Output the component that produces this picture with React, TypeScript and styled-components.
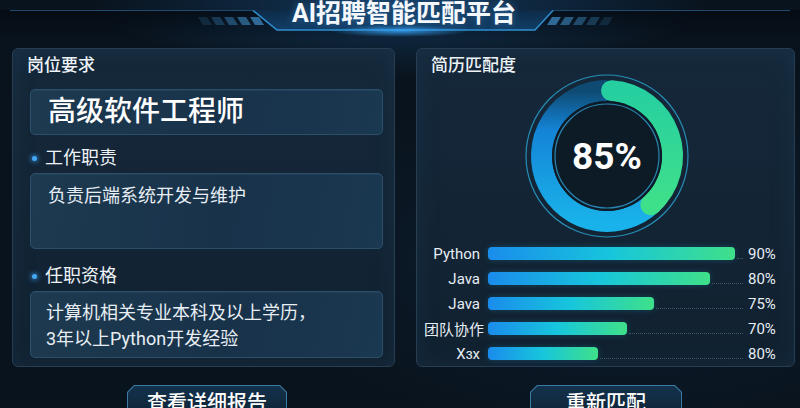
import React from "react";
import styled, { createGlobalStyle } from "styled-components";

const GlobalStyle = createGlobalStyle`
  html, body {
    margin: 0;
    padding: 0;
  }
  body {
    width: 800px;
    height: 408px;
    overflow: hidden;
    background: #09131d;
    font-family: Roboto, "Noto Sans CJK SC", sans-serif;
    color: #fff;
  }
`;

const Screen = styled.div`
  width: 800px;
  height: 408px;
  overflow: hidden;
  display: flex;
  flex-direction: column;
  background:
    radial-gradient(ellipse 440px 110px at 400px 0px, rgba(28, 90, 150, 0.5), transparent 70%),
    radial-gradient(ellipse 520px 260px at 620px 260px, rgba(20, 50, 80, 0.35), transparent 70%),
    #09131d;
`;

/* ---------- header ---------- */

const Header = styled.header`
  position: relative;
  height: 48px;
  flex-shrink: 0;
  display: flex;
  justify-content: center;
`;

const HeaderArt = styled.svg`
  position: absolute;
  inset: 0;
`;

const Title = styled.h1`
  position: relative;
  margin: 0;
  padding: 1px 0 0 8px;
  font-size: 25px;
  line-height: 26px;
  font-weight: 700;
  color: #f4f8fc;
  text-shadow: 0 0 8px rgba(80, 170, 255, 0.45);
`;

/* ---------- panels ---------- */

const Main = styled.main`
  display: grid;
  grid-template-columns: 383px 379px;
  column-gap: 21px;
  padding-left: 12px;
  height: 329px;
`;

const Panel = styled.section`
  box-sizing: border-box;
  height: 100%;
  border: 1px solid #263d52;
  border-radius: 6px;
  background: linear-gradient(180deg, #15283a 0%, #112130 100%);
  box-shadow: inset 0 0 24px rgba(40, 90, 130, 0.18);
  padding: 6px 11px 0 14px;
  display: flex;
  flex-direction: column;
`;

const PanelTitle = styled.h2`
  margin: 0;
  font-size: 17px;
  line-height: 20px;
  font-weight: 500;
  color: #eef3f8;
`;

const InfoBox = styled.div<{ $h: number; $top: number; $pad: string }>`
  box-sizing: border-box;
  height: ${(p) => p.$h}px;
  margin: ${(p) => p.$top}px 0 0 3px;
  padding: ${(p) => p.$pad};
  border: 1px solid #2c4f69;
  border-radius: 5px;
  background: linear-gradient(100deg, #1d3a50 0%, #18324a 55%, #1a3850 100%);
  box-shadow: inset 0 1px 0 rgba(120, 180, 220, 0.08);
`;

const JobName = styled.div`
  font-size: 28px;
  line-height: 44px;
  font-weight: 500;
  color: #ffffff;
`;

const BoxText = styled.p`
  margin: 0;
  font-size: 18px;
  line-height: 26px;
  color: #e8eef4;
`;

const Section = styled.div<{ $top: number }>`
  display: flex;
  align-items: center;
  gap: 8px;
  margin: ${(p) => p.$top}px 0 0 5px;
  height: 22px;
  font-size: 18px;
  line-height: 22px;
  color: #eef3f8;
`;

const Dot = styled.span`
  width: 5px;
  height: 5px;
  border-radius: 50%;
  background: #44a8f5;
  box-shadow: 0 0 5px 1px rgba(60, 160, 245, 0.7);
`;

/* ---------- ring ---------- */

const RingWrap = styled.div`
  display: grid;
  place-items: center;
  margin: -2px auto 0;
  width: 166px;
  height: 166px;
  & > * {
    grid-area: 1 / 1;
  }
`;

const RingValue = styled.span`
  font-size: 37px;
  line-height: 40px;
  font-weight: 700;
  color: #ffffff;
  padding-top: 2px;
`;

/* ---------- bars ---------- */

const Bars = styled.div`
  margin: 2px 0 0 -7px;
  display: flex;
  flex-direction: column;
`;

const BarRow = styled.div`
  display: flex;
  align-items: center;
  height: 25px;
`;

const BarLabel = styled.span`
  width: 56px;
  margin-right: 8px;
  text-align: right;
  font-size: 15px;
  color: #e6edf3;
  white-space: nowrap;
`;

const Track = styled.div`
  width: 255px;
  height: 13px;
  display: flex;
`;

const Fill = styled.div`
  height: 100%;
  border-radius: 4px;
  background: linear-gradient(90deg, #1a8cec 0%, #17c6dc 50%, #3fe089 100%);
  box-shadow: 0 0 6px rgba(30, 170, 220, 0.25);
`;

const Dots = styled.div`
  flex: 1;
  align-self: flex-end;
  margin: 0 0 1px 2px;
  border-bottom: 1px dotted rgba(100, 130, 150, 0.55);
`;

const Pct = styled.span`
  margin-left: 5px;
  font-size: 15px;
  color: #e6edf3;
`;

/* ---------- buttons ---------- */

const Actions = styled.div`
  display: grid;
  grid-template-columns: 383px 379px;
  column-gap: 21px;
  padding-left: 12px;
  margin-top: 18px;
  justify-items: center;
`;

const ActionButton = styled.button<{ $w: number; $shift: number }>`
  width: ${(p) => p.$w}px;
  height: 40px;
  margin-left: ${(p) => p.$shift}px;
  padding: 1px;
  border: none;
  background: #3b7aa3;
  clip-path: polygon(7px 0, calc(100% - 7px) 0, 100% 7px, 100% 100%, 0 100%, 0 7px);
  cursor: pointer;
`;

const ButtonFace = styled.span`
  display: block;
  box-sizing: border-box;
  height: 100%;
  padding-top: 5px;
  background: linear-gradient(180deg, #14324c, #0c1e2e);
  clip-path: polygon(6.5px 0, calc(100% - 6.5px) 0, 100% 6.5px, 100% 100%, 0 100%, 0 6.5px);
  font: 500 20px/24px Roboto, "Noto Sans CJK SC", sans-serif;
  color: #ffffff;
`;

const skills = [
  { name: "Python", fill: 97, pct: "90%" },
  { name: "Java", fill: 87, pct: "80%" },
  { name: "Java", fill: 65, pct: "75%" },
  { name: "团队协作", fill: 54.5, pct: "70%" },
  { name: "Xɜx", fill: 43, pct: "80%" },
];

function HeaderDecor() {
  const stripes = [0, 1, 2, 3, 4];
  return (
    <HeaderArt width="800" height="48" viewBox="0 0 800 48">
      <defs>
        <linearGradient id="trap" x1="0" y1="0" x2="0" y2="1">
          <stop offset="0" stopColor="#0d2b48" />
          <stop offset="1" stopColor="#123e66" />
        </linearGradient>
        <linearGradient id="shade" x1="0" y1="0" x2="0" y2="1">
          <stop offset="0" stopColor="#040a12" stopOpacity="0.85" />
          <stop offset="1" stopColor="#040a12" stopOpacity="0" />
        </linearGradient>
        <linearGradient id="baseLine" x1="0" y1="0" x2="1" y2="0">
          <stop offset="0" stopColor="#2f8fd0" stopOpacity="0.6" />
          <stop offset="0.5" stopColor="#9be0ff" />
          <stop offset="1" stopColor="#2f8fd0" stopOpacity="0.6" />
        </linearGradient>
        <radialGradient id="glow">
          <stop offset="0" stopColor="#3aaaff" stopOpacity="0.8" />
          <stop offset="1" stopColor="#3aaaff" stopOpacity="0" />
        </radialGradient>
      </defs>
      <rect x="0" y="10" width="800" height="30" fill="url(#shade)" />
      <line x1="10" y1="10.5" x2="254" y2="10.5" stroke="#1f4a6e" strokeWidth="1" />
      <line x1="552" y1="10.5" x2="790" y2="10.5" stroke="#1f4a6e" strokeWidth="1" />
      <polygon points="253,10 553,10 535,30 277,30" fill="url(#trap)" />
      <polyline
        points="253,10.5 277,30 535,30 553,10.5"
        fill="none"
        stroke="#2f8fd0"
        strokeWidth="1.5"
      />
      <line x1="290" y1="30" x2="510" y2="30" stroke="url(#baseLine)" strokeWidth="1.8" />
      <ellipse cx="400" cy="31" rx="70" ry="6" fill="url(#glow)" />
      {stripes.map((i) => {
        const x = 198 + i * 13;
        return (
          <polygon
            key={"l" + i}
            points={`${x},17 ${x + 9},17 ${x + 14},25 ${x + 5},25`}
            fill="#3a80b4"
            opacity={0.2 + i * 0.15}
          />
        );
      })}
      {stripes.map((i) => {
        const x = 547 + i * 13;
        return (
          <polygon
            key={"r" + i}
            points={`${x + 5},17 ${x + 14},17 ${x + 9},25 ${x},25`}
            fill="#3a80b4"
            opacity={0.8 - i * 0.15}
          />
        );
      })}
    </HeaderArt>
  );
}

function MatchRing() {
  return (
    <svg width="166" height="166" viewBox="0 0 166 166">
      <defs>
        <linearGradient id="blueArc" x1="0" y1="0" x2="0" y2="1">
          <stop offset="0" stopColor="#0e4a72" />
          <stop offset="0.3" stopColor="#1484d6" />
          <stop offset="1" stopColor="#1ab2ea" />
        </linearGradient>
        <linearGradient id="greenArc" x1="0" y1="0" x2="0" y2="1">
          <stop offset="0" stopColor="#26cfa0" />
          <stop offset="1" stopColor="#3fe08a" />
        </linearGradient>
      </defs>
      <circle cx="83" cy="83" r="81" fill="none" stroke="#2aa0cc" strokeWidth="1.2" opacity="0.85" />
      <circle cx="83" cy="83" r="65.5" fill="none" stroke="#0c2a40" strokeWidth="21" />
      <path
        d="M133.17 125.1 A65.5 65.5 0 1 1 83 17.5"
        fill="none"
        stroke="url(#blueArc)"
        strokeWidth="21"
      />
      <path
        d="M87.57 17.65 A65.5 65.5 0 0 1 126.83 131.68"
        fill="none"
        stroke="url(#greenArc)"
        strokeWidth="21"
        strokeLinecap="round"
      />
      <circle cx="83" cy="83" r="55" fill="#0d1b27" />
      <circle cx="83" cy="83" r="52" fill="none" stroke="#2a86b0" strokeWidth="1.2" />
    </svg>
  );
}

export default function App() {
  return (
    <>
      <GlobalStyle />
      <Screen>
        <Header>
          <HeaderDecor />
          <Title>AI招聘智能匹配平台</Title>
        </Header>

        <Main>
          <Panel>
            <PanelTitle>岗位要求</PanelTitle>
            <InfoBox $h={46} $top={14} $pad="0 17px">
              <JobName>高级软件工程师</JobName>
            </InfoBox>

            <Section $top={12}>
              <Dot />
              工作职责
            </Section>
            <InfoBox $h={76} $top={4} $pad="9px 17px">
              <BoxText>负责后端系统开发与维护</BoxText>
            </InfoBox>

            <Section $top={16}>
              <Dot />
              任职资格
            </Section>
            <InfoBox $h={67} $top={4} $pad="8px 15px">
              <BoxText>
                计算机相关专业本科及以上学历，
                <br />
                3年以上Python开发经验
              </BoxText>
            </InfoBox>
          </Panel>

          <Panel>
            <PanelTitle>简历匹配度</PanelTitle>
            <RingWrap>
              <MatchRing />
              <RingValue>85%</RingValue>
            </RingWrap>
            <Bars>
              {skills.map((s, i) => (
                <BarRow key={i}>
                  <BarLabel>{s.name}</BarLabel>
                  <Track>
                    <Fill style={{ width: `${s.fill}%` }} />
                    <Dots />
                  </Track>
                  <Pct>{s.pct}</Pct>
                </BarRow>
              ))}
            </Bars>
          </Panel>
        </Main>

        <Actions>
          <ActionButton $w={160} $shift={7}>
            <ButtonFace>查看详细报告</ButtonFace>
          </ActionButton>
          <ActionButton $w={152} $shift={1}>
            <ButtonFace>重新匹配</ButtonFace>
          </ActionButton>
        </Actions>
      </Screen>
    </>
  );
}
